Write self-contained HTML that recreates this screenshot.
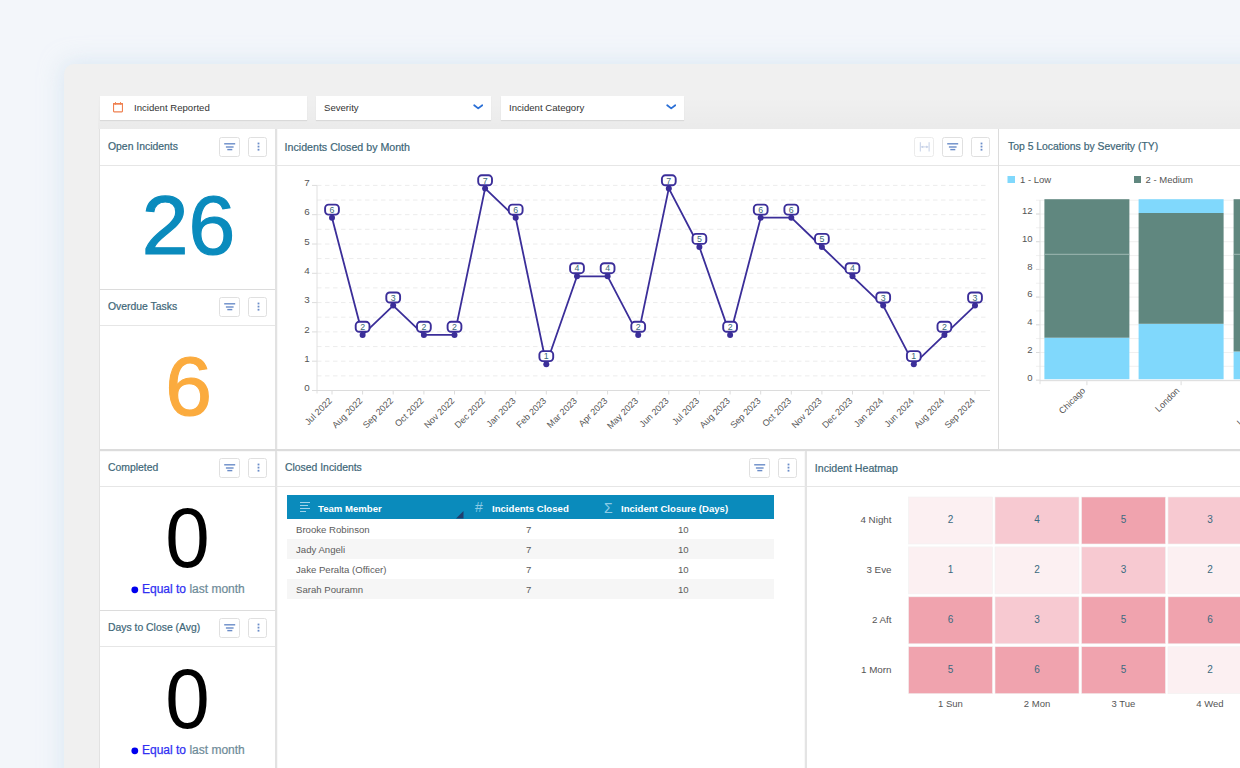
<!DOCTYPE html><html><head><meta charset="utf-8"><style>
*{box-sizing:border-box}
html,body{margin:0;padding:0;width:1240px;height:768px;overflow:hidden;background:#f3f6fa;font-family:"Liberation Sans", sans-serif}
.abs{position:absolute}
#cont{position:absolute;left:64px;top:64px;width:1300px;height:900px;background:#f0f0f0;border-radius:10px;box-shadow:0 0 22px 2px rgba(198,220,238,0.55)}
.panel{position:absolute;background:#fff}
.ttl{position:absolute;font-size:10.4px;color:#3d6677;white-space:nowrap;line-height:12px;-webkit-text-stroke:0.2px #3d6677}
.hline{position:absolute;height:1px;background:#e6e6e6}
.vline{position:absolute;width:1px;background:#dcdcdc}
.hl{position:absolute;height:1px;background:#dcdcdc}
.btn{position:absolute;border:1px solid #e0e0e0;border-radius:2.5px;background:#fff}
.fbox{position:absolute;background:#fff;top:96px;height:24px;box-shadow:0 1px 1px rgba(0,0,0,0.08)}
.ftxt{position:absolute;font-size:9.6px;color:#333;white-space:nowrap;line-height:12px}
.big{position:absolute;white-space:nowrap;text-align:center;line-height:1}
.eq{position:absolute;font-size:12px;white-space:nowrap;line-height:14px}
</style></head><body>
<div id="cont"></div>

<div class="abs" style="left:98px;top:97px;width:1200px;height:32px;background:linear-gradient(rgba(0,0,0,0),rgba(0,0,0,0.022))"></div>
<div class="fbox" style="left:100px;width:207px"></div>
<svg class="abs" style="left:112px;top:100.5px" width="12" height="12" viewBox="0 0 12 12"><rect x="1.55" y="2.6" width="8.9" height="8.3" rx="0.6" fill="none" stroke="#ef8050" stroke-width="1.1"/><rect x="1" y="2.1" width="10" height="1.5" fill="#ef8050"/><rect x="3.1" y="1" width="0.9" height="2.6" fill="#ef8050"/><rect x="8" y="1" width="0.9" height="2.6" fill="#ef8050"/></svg>
<div class="ftxt" style="left:134px;top:102px">Incident Reported</div>
<div class="fbox" style="left:316px;width:175px"></div>
<div class="ftxt" style="left:324px;top:102px">Severity</div>
<svg class="abs" style="left:473px;top:104px" width="10" height="6" viewBox="0 0 10 6"><path d="M1.2 1.2 L5.2 4.4 L9.3 1.2" fill="none" stroke="#2a6fd6" stroke-width="1.8" stroke-linecap="round" stroke-linejoin="round"/></svg>
<div class="fbox" style="left:501px;width:183px"></div>
<div class="ftxt" style="left:509px;top:102px">Incident Category</div>
<svg class="abs" style="left:666px;top:104px" width="10" height="6" viewBox="0 0 10 6"><path d="M1.2 1.2 L5.2 4.4 L9.3 1.2" fill="none" stroke="#2a6fd6" stroke-width="1.8" stroke-linecap="round" stroke-linejoin="round"/></svg>
<div class="panel" style="left:100px;top:129px;width:1140px;height:639px"></div>
<div class="vline" style="left:277px;top:129px;height:639px;background:#f8f8f8"></div>
<div class="vline" style="left:804px;top:450px;height:318px;background:#f8f8f8"></div>
<div class="hl" style="left:100px;top:451px;width:1140px;background:#f8f8f8"></div>
<div class="vline" style="left:275px;top:129px;height:639px;width:2px;background:#e2e2e2"></div>
<div class="vline" style="left:998px;top:129px;height:321px"></div>
<div class="vline" style="left:805px;top:450px;height:318px;width:2px;background:#e4e4e4"></div>
<div class="hl" style="left:100px;top:289px;width:175px"></div>
<div class="hl" style="left:100px;top:449px;width:1140px;height:2px;background:#dcdcdc"></div>
<div class="hl" style="left:100px;top:610px;width:175px"></div>
<div class="vline" style="left:99px;top:129px;height:639px;background:#e2e2e2"></div>
<div class="ttl" style="left:108px;top:141px">Open Incidents</div><div class="hline" style="left:100px;top:165px;width:175px"></div><div class="btn" style="left:219px;top:137px;width:21px;height:20px;opacity:1.0"><svg width="20" height="19" viewBox="0 0 20 19" style="position:absolute;left:0;top:0"><rect x="4.2" y="5.1" width="11" height="1.4" fill="#6a8cc8"/><rect x="5.9" y="8.3" width="7.7" height="1.4" fill="#6a8cc8"/><rect x="7.3" y="10.9" width="5" height="1.4" fill="#6a8cc8"/></svg></div><div class="btn" style="left:248px;top:137px;width:19px;height:20px;opacity:1.0"><svg width="19" height="19" viewBox="0 0 19 19" style="position:absolute;left:0;top:0"><rect x="8.6" y="4.6" width="1.8" height="1.8" fill="#6a8cc8"/><rect x="8.6" y="7.7" width="1.8" height="1.8" fill="#6a8cc8"/><rect x="8.6" y="10.8" width="1.8" height="1.8" fill="#6a8cc8"/></svg></div>
<div class="ttl" style="left:108px;top:301px">Overdue Tasks</div><div class="hline" style="left:100px;top:325px;width:175px"></div><div class="btn" style="left:219px;top:297px;width:21px;height:20px;opacity:1.0"><svg width="20" height="19" viewBox="0 0 20 19" style="position:absolute;left:0;top:0"><rect x="4.2" y="5.1" width="11" height="1.4" fill="#6a8cc8"/><rect x="5.9" y="8.3" width="7.7" height="1.4" fill="#6a8cc8"/><rect x="7.3" y="10.9" width="5" height="1.4" fill="#6a8cc8"/></svg></div><div class="btn" style="left:248px;top:297px;width:19px;height:20px;opacity:1.0"><svg width="19" height="19" viewBox="0 0 19 19" style="position:absolute;left:0;top:0"><rect x="8.6" y="4.6" width="1.8" height="1.8" fill="#6a8cc8"/><rect x="8.6" y="7.7" width="1.8" height="1.8" fill="#6a8cc8"/><rect x="8.6" y="10.8" width="1.8" height="1.8" fill="#6a8cc8"/></svg></div>
<div class="ttl" style="left:108px;top:462px">Completed</div><div class="hline" style="left:100px;top:486px;width:175px"></div><div class="btn" style="left:219px;top:458px;width:21px;height:20px;opacity:1.0"><svg width="20" height="19" viewBox="0 0 20 19" style="position:absolute;left:0;top:0"><rect x="4.2" y="5.1" width="11" height="1.4" fill="#6a8cc8"/><rect x="5.9" y="8.3" width="7.7" height="1.4" fill="#6a8cc8"/><rect x="7.3" y="10.9" width="5" height="1.4" fill="#6a8cc8"/></svg></div><div class="btn" style="left:248px;top:458px;width:19px;height:20px;opacity:1.0"><svg width="19" height="19" viewBox="0 0 19 19" style="position:absolute;left:0;top:0"><rect x="8.6" y="4.6" width="1.8" height="1.8" fill="#6a8cc8"/><rect x="8.6" y="7.7" width="1.8" height="1.8" fill="#6a8cc8"/><rect x="8.6" y="10.8" width="1.8" height="1.8" fill="#6a8cc8"/></svg></div>
<div class="ttl" style="left:108px;top:622px">Days to Close (Avg)</div><div class="hline" style="left:100px;top:646px;width:175px"></div><div class="btn" style="left:219px;top:618px;width:21px;height:20px;opacity:1.0"><svg width="20" height="19" viewBox="0 0 20 19" style="position:absolute;left:0;top:0"><rect x="4.2" y="5.1" width="11" height="1.4" fill="#6a8cc8"/><rect x="5.9" y="8.3" width="7.7" height="1.4" fill="#6a8cc8"/><rect x="7.3" y="10.9" width="5" height="1.4" fill="#6a8cc8"/></svg></div><div class="btn" style="left:248px;top:618px;width:19px;height:20px;opacity:1.0"><svg width="19" height="19" viewBox="0 0 19 19" style="position:absolute;left:0;top:0"><rect x="8.6" y="4.6" width="1.8" height="1.8" fill="#6a8cc8"/><rect x="8.6" y="7.7" width="1.8" height="1.8" fill="#6a8cc8"/><rect x="8.6" y="10.8" width="1.8" height="1.8" fill="#6a8cc8"/></svg></div>
<div class="big" style="left:101px;width:175px;top:183px;font-size:84px;color:#0a8bbd;-webkit-text-stroke:1.2px #0a8bbd">26</div>
<div class="big" style="left:101px;width:175px;top:344px;font-size:84px;color:#fbab3e;-webkit-text-stroke:1.2px #fbab3e">6</div>
<div class="big" style="left:100px;width:175px;top:494px;font-size:86px;color:#000;font-weight:400;transform:scaleX(0.93)">0</div>
<div class="big" style="left:100px;width:175px;top:655px;font-size:86px;color:#000;font-weight:400;transform:scaleX(0.93)">0</div>
<svg class="abs" style="left:131px;top:585.5px" width="8" height="8"><circle cx="3.8" cy="3.8" r="3.4" fill="#0000ee"/></svg><div class="eq" style="left:142px;top:582px"><span style="color:#3030f2;-webkit-text-stroke:0.25px #3030f2">Equal to</span> <span style="color:#6d8a97;-webkit-text-stroke:0.2px #6d8a97">last month</span></div>
<svg class="abs" style="left:131px;top:746.5px" width="8" height="8"><circle cx="3.8" cy="3.8" r="3.4" fill="#0000ee"/></svg><div class="eq" style="left:142px;top:743px"><span style="color:#3030f2;-webkit-text-stroke:0.25px #3030f2">Equal to</span> <span style="color:#6d8a97;-webkit-text-stroke:0.2px #6d8a97">last month</span></div>
<div class="ttl" style="left:284.6px;top:141px;font-size:10.65px">Incidents Closed by Month</div>
<div class="hline" style="left:276px;top:165px;width:722px"></div>
<div class="btn" style="left:914px;top:137px;width:20px;height:20px;border-color:#ebebeb"><svg width="18" height="18" style="position:absolute;left:0;top:0"><rect x="4.8" y="4.2" width="1" height="9.3" fill="#c4cfe6"/><rect x="13.6" y="4.2" width="1" height="9.3" fill="#c4cfe6"/><path d="M6 8.9 H13.4" stroke="#c4cfe6" stroke-width="0.9"/><path d="M6.2 8.9 L8.2 7.6 L8.2 10.2 Z M13.2 8.9 L11.2 7.6 L11.2 10.2 Z" fill="#c4cfe6"/></svg></div>
<div class="btn" style="left:942px;top:137px;width:21px;height:20px;opacity:1.0"><svg width="20" height="19" viewBox="0 0 20 19" style="position:absolute;left:0;top:0"><rect x="4.2" y="5.1" width="11" height="1.4" fill="#6a8cc8"/><rect x="5.9" y="8.3" width="7.7" height="1.4" fill="#6a8cc8"/><rect x="7.3" y="10.9" width="5" height="1.4" fill="#6a8cc8"/></svg></div>
<div class="btn" style="left:971px;top:137px;width:19px;height:20px;opacity:1.0"><svg width="19" height="19" viewBox="0 0 19 19" style="position:absolute;left:0;top:0"><rect x="8.6" y="4.6" width="1.8" height="1.8" fill="#6a8cc8"/><rect x="8.6" y="7.7" width="1.8" height="1.8" fill="#6a8cc8"/><rect x="8.6" y="10.8" width="1.8" height="1.8" fill="#6a8cc8"/></svg></div>
<svg class="abs" style="left:0;top:0" width="1240" height="768">
<line x1="317" y1="375.9" x2="987" y2="375.9" stroke="#ececec" stroke-width="1" stroke-dasharray="4.5 3.5"/>
<line x1="317" y1="361.2" x2="987" y2="361.2" stroke="#ececec" stroke-width="1" stroke-dasharray="4.5 3.5"/>
<line x1="317" y1="346.6" x2="987" y2="346.6" stroke="#ececec" stroke-width="1" stroke-dasharray="4.5 3.5"/>
<line x1="317" y1="331.9" x2="987" y2="331.9" stroke="#ececec" stroke-width="1" stroke-dasharray="4.5 3.5"/>
<line x1="317" y1="317.2" x2="987" y2="317.2" stroke="#ececec" stroke-width="1" stroke-dasharray="4.5 3.5"/>
<line x1="317" y1="302.6" x2="987" y2="302.6" stroke="#ececec" stroke-width="1" stroke-dasharray="4.5 3.5"/>
<line x1="317" y1="287.9" x2="987" y2="287.9" stroke="#ececec" stroke-width="1" stroke-dasharray="4.5 3.5"/>
<line x1="317" y1="273.3" x2="987" y2="273.3" stroke="#ececec" stroke-width="1" stroke-dasharray="4.5 3.5"/>
<line x1="317" y1="258.6" x2="987" y2="258.6" stroke="#ececec" stroke-width="1" stroke-dasharray="4.5 3.5"/>
<line x1="317" y1="244.0" x2="987" y2="244.0" stroke="#ececec" stroke-width="1" stroke-dasharray="4.5 3.5"/>
<line x1="317" y1="229.3" x2="987" y2="229.3" stroke="#ececec" stroke-width="1" stroke-dasharray="4.5 3.5"/>
<line x1="317" y1="214.7" x2="987" y2="214.7" stroke="#ececec" stroke-width="1" stroke-dasharray="4.5 3.5"/>
<line x1="317" y1="200.0" x2="987" y2="200.0" stroke="#ececec" stroke-width="1" stroke-dasharray="4.5 3.5"/>
<line x1="317" y1="185.4" x2="987" y2="185.4" stroke="#ececec" stroke-width="1" stroke-dasharray="4.5 3.5"/>
<line x1="312" y1="390.5" x2="317" y2="390.5" stroke="#dcdcdc" stroke-width="1"/>
<text x="309.8" y="391.1" font-size="9.8" fill="#555" text-anchor="end" font-family="Liberation Sans">0</text>
<line x1="312" y1="361.2" x2="317" y2="361.2" stroke="#dcdcdc" stroke-width="1"/>
<text x="309.8" y="361.8" font-size="9.8" fill="#555" text-anchor="end" font-family="Liberation Sans">1</text>
<line x1="312" y1="331.9" x2="317" y2="331.9" stroke="#dcdcdc" stroke-width="1"/>
<text x="309.8" y="332.5" font-size="9.8" fill="#555" text-anchor="end" font-family="Liberation Sans">2</text>
<line x1="312" y1="302.6" x2="317" y2="302.6" stroke="#dcdcdc" stroke-width="1"/>
<text x="309.8" y="303.2" font-size="9.8" fill="#555" text-anchor="end" font-family="Liberation Sans">3</text>
<line x1="312" y1="273.3" x2="317" y2="273.3" stroke="#dcdcdc" stroke-width="1"/>
<text x="309.8" y="273.9" font-size="9.8" fill="#555" text-anchor="end" font-family="Liberation Sans">4</text>
<line x1="312" y1="244.0" x2="317" y2="244.0" stroke="#dcdcdc" stroke-width="1"/>
<text x="309.8" y="244.6" font-size="9.8" fill="#555" text-anchor="end" font-family="Liberation Sans">5</text>
<line x1="312" y1="214.7" x2="317" y2="214.7" stroke="#dcdcdc" stroke-width="1"/>
<text x="309.8" y="215.3" font-size="9.8" fill="#555" text-anchor="end" font-family="Liberation Sans">6</text>
<line x1="312" y1="185.4" x2="317" y2="185.4" stroke="#dcdcdc" stroke-width="1"/>
<text x="309.8" y="186.0" font-size="9.8" fill="#555" text-anchor="end" font-family="Liberation Sans">7</text>
<line x1="317" y1="185.4" x2="317" y2="393.5" stroke="#e0e0e0" stroke-width="1"/>
<line x1="312" y1="390.5" x2="990" y2="390.5" stroke="#dcdcdc" stroke-width="1.2"/>
<line x1="332.0" y1="390.5" x2="332.0" y2="394.5" stroke="#dcdcdc" stroke-width="1"/>
<text transform="translate(332.5,401.5) rotate(-45)" font-size="9" fill="#555" text-anchor="end" font-family="Liberation Sans">Jul 2022</text>
<line x1="362.6" y1="390.5" x2="362.6" y2="394.5" stroke="#dcdcdc" stroke-width="1"/>
<text transform="translate(363.1,401.5) rotate(-45)" font-size="9" fill="#555" text-anchor="end" font-family="Liberation Sans">Aug 2022</text>
<line x1="393.2" y1="390.5" x2="393.2" y2="394.5" stroke="#dcdcdc" stroke-width="1"/>
<text transform="translate(393.7,401.5) rotate(-45)" font-size="9" fill="#555" text-anchor="end" font-family="Liberation Sans">Sep 2022</text>
<line x1="423.9" y1="390.5" x2="423.9" y2="394.5" stroke="#dcdcdc" stroke-width="1"/>
<text transform="translate(424.4,401.5) rotate(-45)" font-size="9" fill="#555" text-anchor="end" font-family="Liberation Sans">Oct 2022</text>
<line x1="454.5" y1="390.5" x2="454.5" y2="394.5" stroke="#dcdcdc" stroke-width="1"/>
<text transform="translate(455.0,401.5) rotate(-45)" font-size="9" fill="#555" text-anchor="end" font-family="Liberation Sans">Nov 2022</text>
<line x1="485.1" y1="390.5" x2="485.1" y2="394.5" stroke="#dcdcdc" stroke-width="1"/>
<text transform="translate(485.6,401.5) rotate(-45)" font-size="9" fill="#555" text-anchor="end" font-family="Liberation Sans">Dec 2022</text>
<line x1="515.7" y1="390.5" x2="515.7" y2="394.5" stroke="#dcdcdc" stroke-width="1"/>
<text transform="translate(516.2,401.5) rotate(-45)" font-size="9" fill="#555" text-anchor="end" font-family="Liberation Sans">Jan 2023</text>
<line x1="546.3" y1="390.5" x2="546.3" y2="394.5" stroke="#dcdcdc" stroke-width="1"/>
<text transform="translate(546.8,401.5) rotate(-45)" font-size="9" fill="#555" text-anchor="end" font-family="Liberation Sans">Feb 2023</text>
<line x1="577.0" y1="390.5" x2="577.0" y2="394.5" stroke="#dcdcdc" stroke-width="1"/>
<text transform="translate(577.5,401.5) rotate(-45)" font-size="9" fill="#555" text-anchor="end" font-family="Liberation Sans">Mar 2023</text>
<line x1="607.6" y1="390.5" x2="607.6" y2="394.5" stroke="#dcdcdc" stroke-width="1"/>
<text transform="translate(608.1,401.5) rotate(-45)" font-size="9" fill="#555" text-anchor="end" font-family="Liberation Sans">Apr 2023</text>
<line x1="638.2" y1="390.5" x2="638.2" y2="394.5" stroke="#dcdcdc" stroke-width="1"/>
<text transform="translate(638.7,401.5) rotate(-45)" font-size="9" fill="#555" text-anchor="end" font-family="Liberation Sans">May 2023</text>
<line x1="668.8" y1="390.5" x2="668.8" y2="394.5" stroke="#dcdcdc" stroke-width="1"/>
<text transform="translate(669.3,401.5) rotate(-45)" font-size="9" fill="#555" text-anchor="end" font-family="Liberation Sans">Jun 2023</text>
<line x1="699.4" y1="390.5" x2="699.4" y2="394.5" stroke="#dcdcdc" stroke-width="1"/>
<text transform="translate(699.9,401.5) rotate(-45)" font-size="9" fill="#555" text-anchor="end" font-family="Liberation Sans">Jul 2023</text>
<line x1="730.1" y1="390.5" x2="730.1" y2="394.5" stroke="#dcdcdc" stroke-width="1"/>
<text transform="translate(730.6,401.5) rotate(-45)" font-size="9" fill="#555" text-anchor="end" font-family="Liberation Sans">Aug 2023</text>
<line x1="760.7" y1="390.5" x2="760.7" y2="394.5" stroke="#dcdcdc" stroke-width="1"/>
<text transform="translate(761.2,401.5) rotate(-45)" font-size="9" fill="#555" text-anchor="end" font-family="Liberation Sans">Sep 2023</text>
<line x1="791.3" y1="390.5" x2="791.3" y2="394.5" stroke="#dcdcdc" stroke-width="1"/>
<text transform="translate(791.8,401.5) rotate(-45)" font-size="9" fill="#555" text-anchor="end" font-family="Liberation Sans">Oct 2023</text>
<line x1="821.9" y1="390.5" x2="821.9" y2="394.5" stroke="#dcdcdc" stroke-width="1"/>
<text transform="translate(822.4,401.5) rotate(-45)" font-size="9" fill="#555" text-anchor="end" font-family="Liberation Sans">Nov 2023</text>
<line x1="852.5" y1="390.5" x2="852.5" y2="394.5" stroke="#dcdcdc" stroke-width="1"/>
<text transform="translate(853.0,401.5) rotate(-45)" font-size="9" fill="#555" text-anchor="end" font-family="Liberation Sans">Dec 2023</text>
<line x1="883.2" y1="390.5" x2="883.2" y2="394.5" stroke="#dcdcdc" stroke-width="1"/>
<text transform="translate(883.7,401.5) rotate(-45)" font-size="9" fill="#555" text-anchor="end" font-family="Liberation Sans">Jan 2024</text>
<line x1="913.8" y1="390.5" x2="913.8" y2="394.5" stroke="#dcdcdc" stroke-width="1"/>
<text transform="translate(914.3,401.5) rotate(-45)" font-size="9" fill="#555" text-anchor="end" font-family="Liberation Sans">Jun 2024</text>
<line x1="944.4" y1="390.5" x2="944.4" y2="394.5" stroke="#dcdcdc" stroke-width="1"/>
<text transform="translate(944.9,401.5) rotate(-45)" font-size="9" fill="#555" text-anchor="end" font-family="Liberation Sans">Aug 2024</text>
<line x1="975.0" y1="390.5" x2="975.0" y2="394.5" stroke="#dcdcdc" stroke-width="1"/>
<text transform="translate(975.5,401.5) rotate(-45)" font-size="9" fill="#555" text-anchor="end" font-family="Liberation Sans">Sep 2024</text>
<polyline points="332.0,217.7 362.6,334.9 393.2,305.6 423.9,334.9 454.5,334.9 485.1,188.4 515.7,217.7 546.3,364.2 577.0,276.3 607.6,276.3 638.2,334.9 668.8,188.4 699.4,247.0 730.1,334.9 760.7,217.7 791.3,217.7 821.9,247.0 852.5,276.3 883.2,305.6 913.8,364.2 944.4,334.9 975.0,305.6" fill="none" stroke="#3b2e99" stroke-width="1.8" stroke-linejoin="round"/>
<circle cx="332.0" cy="217.7" r="3" fill="#3b2e99"/>
<rect x="325.1" y="204.6" width="13.8" height="10" rx="3.5" fill="#fff" stroke="#3b2e99" stroke-width="1.9"/>
<text x="332.0" y="212.8" font-size="8.8" fill="#3a6878" text-anchor="middle" font-family="Liberation Sans">6</text>
<circle cx="362.6" cy="334.9" r="3" fill="#3b2e99"/>
<rect x="355.7" y="321.8" width="13.8" height="10" rx="3.5" fill="#fff" stroke="#3b2e99" stroke-width="1.9"/>
<text x="362.6" y="330.0" font-size="8.8" fill="#3a6878" text-anchor="middle" font-family="Liberation Sans">2</text>
<circle cx="393.2" cy="305.6" r="3" fill="#3b2e99"/>
<rect x="386.3" y="292.5" width="13.8" height="10" rx="3.5" fill="#fff" stroke="#3b2e99" stroke-width="1.9"/>
<text x="393.2" y="300.7" font-size="8.8" fill="#3a6878" text-anchor="middle" font-family="Liberation Sans">3</text>
<circle cx="423.9" cy="334.9" r="3" fill="#3b2e99"/>
<rect x="417.0" y="321.8" width="13.8" height="10" rx="3.5" fill="#fff" stroke="#3b2e99" stroke-width="1.9"/>
<text x="423.9" y="330.0" font-size="8.8" fill="#3a6878" text-anchor="middle" font-family="Liberation Sans">2</text>
<circle cx="454.5" cy="334.9" r="3" fill="#3b2e99"/>
<rect x="447.6" y="321.8" width="13.8" height="10" rx="3.5" fill="#fff" stroke="#3b2e99" stroke-width="1.9"/>
<text x="454.5" y="330.0" font-size="8.8" fill="#3a6878" text-anchor="middle" font-family="Liberation Sans">2</text>
<circle cx="485.1" cy="188.4" r="3" fill="#3b2e99"/>
<rect x="478.2" y="175.3" width="13.8" height="10" rx="3.5" fill="#fff" stroke="#3b2e99" stroke-width="1.9"/>
<text x="485.1" y="183.5" font-size="8.8" fill="#3a6878" text-anchor="middle" font-family="Liberation Sans">7</text>
<circle cx="515.7" cy="217.7" r="3" fill="#3b2e99"/>
<rect x="508.8" y="204.6" width="13.8" height="10" rx="3.5" fill="#fff" stroke="#3b2e99" stroke-width="1.9"/>
<text x="515.7" y="212.8" font-size="8.8" fill="#3a6878" text-anchor="middle" font-family="Liberation Sans">6</text>
<circle cx="546.3" cy="364.2" r="3" fill="#3b2e99"/>
<rect x="539.4" y="351.1" width="13.8" height="10" rx="3.5" fill="#fff" stroke="#3b2e99" stroke-width="1.9"/>
<text x="546.3" y="359.3" font-size="8.8" fill="#3a6878" text-anchor="middle" font-family="Liberation Sans">1</text>
<circle cx="577.0" cy="276.3" r="3" fill="#3b2e99"/>
<rect x="570.1" y="263.2" width="13.8" height="10" rx="3.5" fill="#fff" stroke="#3b2e99" stroke-width="1.9"/>
<text x="577.0" y="271.4" font-size="8.8" fill="#3a6878" text-anchor="middle" font-family="Liberation Sans">4</text>
<circle cx="607.6" cy="276.3" r="3" fill="#3b2e99"/>
<rect x="600.7" y="263.2" width="13.8" height="10" rx="3.5" fill="#fff" stroke="#3b2e99" stroke-width="1.9"/>
<text x="607.6" y="271.4" font-size="8.8" fill="#3a6878" text-anchor="middle" font-family="Liberation Sans">4</text>
<circle cx="638.2" cy="334.9" r="3" fill="#3b2e99"/>
<rect x="631.3" y="321.8" width="13.8" height="10" rx="3.5" fill="#fff" stroke="#3b2e99" stroke-width="1.9"/>
<text x="638.2" y="330.0" font-size="8.8" fill="#3a6878" text-anchor="middle" font-family="Liberation Sans">2</text>
<circle cx="668.8" cy="188.4" r="3" fill="#3b2e99"/>
<rect x="661.9" y="175.3" width="13.8" height="10" rx="3.5" fill="#fff" stroke="#3b2e99" stroke-width="1.9"/>
<text x="668.8" y="183.5" font-size="8.8" fill="#3a6878" text-anchor="middle" font-family="Liberation Sans">7</text>
<circle cx="699.4" cy="247.0" r="3" fill="#3b2e99"/>
<rect x="692.5" y="233.9" width="13.8" height="10" rx="3.5" fill="#fff" stroke="#3b2e99" stroke-width="1.9"/>
<text x="699.4" y="242.1" font-size="8.8" fill="#3a6878" text-anchor="middle" font-family="Liberation Sans">5</text>
<circle cx="730.1" cy="334.9" r="3" fill="#3b2e99"/>
<rect x="723.2" y="321.8" width="13.8" height="10" rx="3.5" fill="#fff" stroke="#3b2e99" stroke-width="1.9"/>
<text x="730.1" y="330.0" font-size="8.8" fill="#3a6878" text-anchor="middle" font-family="Liberation Sans">2</text>
<circle cx="760.7" cy="217.7" r="3" fill="#3b2e99"/>
<rect x="753.8" y="204.6" width="13.8" height="10" rx="3.5" fill="#fff" stroke="#3b2e99" stroke-width="1.9"/>
<text x="760.7" y="212.8" font-size="8.8" fill="#3a6878" text-anchor="middle" font-family="Liberation Sans">6</text>
<circle cx="791.3" cy="217.7" r="3" fill="#3b2e99"/>
<rect x="784.4" y="204.6" width="13.8" height="10" rx="3.5" fill="#fff" stroke="#3b2e99" stroke-width="1.9"/>
<text x="791.3" y="212.8" font-size="8.8" fill="#3a6878" text-anchor="middle" font-family="Liberation Sans">6</text>
<circle cx="821.9" cy="247.0" r="3" fill="#3b2e99"/>
<rect x="815.0" y="233.9" width="13.8" height="10" rx="3.5" fill="#fff" stroke="#3b2e99" stroke-width="1.9"/>
<text x="821.9" y="242.1" font-size="8.8" fill="#3a6878" text-anchor="middle" font-family="Liberation Sans">5</text>
<circle cx="852.5" cy="276.3" r="3" fill="#3b2e99"/>
<rect x="845.6" y="263.2" width="13.8" height="10" rx="3.5" fill="#fff" stroke="#3b2e99" stroke-width="1.9"/>
<text x="852.5" y="271.4" font-size="8.8" fill="#3a6878" text-anchor="middle" font-family="Liberation Sans">4</text>
<circle cx="883.2" cy="305.6" r="3" fill="#3b2e99"/>
<rect x="876.3" y="292.5" width="13.8" height="10" rx="3.5" fill="#fff" stroke="#3b2e99" stroke-width="1.9"/>
<text x="883.2" y="300.7" font-size="8.8" fill="#3a6878" text-anchor="middle" font-family="Liberation Sans">3</text>
<circle cx="913.8" cy="364.2" r="3" fill="#3b2e99"/>
<rect x="906.9" y="351.1" width="13.8" height="10" rx="3.5" fill="#fff" stroke="#3b2e99" stroke-width="1.9"/>
<text x="913.8" y="359.3" font-size="8.8" fill="#3a6878" text-anchor="middle" font-family="Liberation Sans">1</text>
<circle cx="944.4" cy="334.9" r="3" fill="#3b2e99"/>
<rect x="937.5" y="321.8" width="13.8" height="10" rx="3.5" fill="#fff" stroke="#3b2e99" stroke-width="1.9"/>
<text x="944.4" y="330.0" font-size="8.8" fill="#3a6878" text-anchor="middle" font-family="Liberation Sans">2</text>
<circle cx="975.0" cy="305.6" r="3" fill="#3b2e99"/>
<rect x="968.1" y="292.5" width="13.8" height="10" rx="3.5" fill="#fff" stroke="#3b2e99" stroke-width="1.9"/>
<text x="975.0" y="300.7" font-size="8.8" fill="#3a6878" text-anchor="middle" font-family="Liberation Sans">3</text>
<rect x="1007.5" y="176" width="7.5" height="7" fill="#80d8fc"/>
<text x="1020" y="183" font-size="9.5" fill="#555" font-family="Liberation Sans">1 - Low</text>
<rect x="1134" y="176" width="7" height="7" fill="#60877f"/>
<text x="1145.5" y="183" font-size="9.5" fill="#555" font-family="Liberation Sans">2 - Medium</text>
<line x1="1036" y1="380.2" x2="1240" y2="380.2" stroke="#f0f0f0" stroke-width="1"/>
<line x1="1036" y1="366.3" x2="1240" y2="366.3" stroke="#f0f0f0" stroke-width="1"/>
<line x1="1036" y1="352.5" x2="1240" y2="352.5" stroke="#f0f0f0" stroke-width="1"/>
<line x1="1036" y1="338.6" x2="1240" y2="338.6" stroke="#f0f0f0" stroke-width="1"/>
<line x1="1036" y1="324.8" x2="1240" y2="324.8" stroke="#f0f0f0" stroke-width="1"/>
<line x1="1036" y1="310.9" x2="1240" y2="310.9" stroke="#f0f0f0" stroke-width="1"/>
<line x1="1036" y1="297.1" x2="1240" y2="297.1" stroke="#f0f0f0" stroke-width="1"/>
<line x1="1036" y1="283.2" x2="1240" y2="283.2" stroke="#f0f0f0" stroke-width="1"/>
<line x1="1036" y1="269.4" x2="1240" y2="269.4" stroke="#f0f0f0" stroke-width="1"/>
<line x1="1036" y1="255.6" x2="1240" y2="255.6" stroke="#f0f0f0" stroke-width="1"/>
<line x1="1036" y1="241.7" x2="1240" y2="241.7" stroke="#f0f0f0" stroke-width="1"/>
<line x1="1036" y1="227.8" x2="1240" y2="227.8" stroke="#f0f0f0" stroke-width="1"/>
<line x1="1036" y1="214.0" x2="1240" y2="214.0" stroke="#f0f0f0" stroke-width="1"/>
<line x1="1036" y1="200.2" x2="1240" y2="200.2" stroke="#f0f0f0" stroke-width="1"/>
<line x1="1036" y1="380.2" x2="1040" y2="380.2" stroke="#dcdcdc" stroke-width="1"/>
<text x="1032.5" y="380.5" font-size="9.5" fill="#555" text-anchor="end" font-family="Liberation Sans">0</text>
<line x1="1036" y1="352.5" x2="1040" y2="352.5" stroke="#dcdcdc" stroke-width="1"/>
<text x="1032.5" y="352.8" font-size="9.5" fill="#555" text-anchor="end" font-family="Liberation Sans">2</text>
<line x1="1036" y1="324.8" x2="1040" y2="324.8" stroke="#dcdcdc" stroke-width="1"/>
<text x="1032.5" y="325.1" font-size="9.5" fill="#555" text-anchor="end" font-family="Liberation Sans">4</text>
<line x1="1036" y1="297.1" x2="1040" y2="297.1" stroke="#dcdcdc" stroke-width="1"/>
<text x="1032.5" y="297.4" font-size="9.5" fill="#555" text-anchor="end" font-family="Liberation Sans">6</text>
<line x1="1036" y1="269.4" x2="1040" y2="269.4" stroke="#dcdcdc" stroke-width="1"/>
<text x="1032.5" y="269.7" font-size="9.5" fill="#555" text-anchor="end" font-family="Liberation Sans">8</text>
<line x1="1036" y1="241.7" x2="1040" y2="241.7" stroke="#dcdcdc" stroke-width="1"/>
<text x="1032.5" y="242.0" font-size="9.5" fill="#555" text-anchor="end" font-family="Liberation Sans">10</text>
<line x1="1036" y1="214.0" x2="1040" y2="214.0" stroke="#dcdcdc" stroke-width="1"/>
<text x="1032.5" y="214.3" font-size="9.5" fill="#555" text-anchor="end" font-family="Liberation Sans">12</text>
<line x1="1040" y1="200.2" x2="1040" y2="384.2" stroke="#e0e0e0" stroke-width="1"/>
<line x1="1040" y1="380.7" x2="1240" y2="380.7" stroke="#dcdcdc" stroke-width="1"/>
<rect x="1044.4" y="337.6" width="85" height="41.6" fill="#80d8fc"/>
<rect x="1044.4" y="199.2" width="85" height="138.5" fill="#60877f"/>
<rect x="1138.6" y="323.8" width="85" height="55.4" fill="#80d8fc"/>
<rect x="1138.6" y="213.0" width="85" height="110.8" fill="#60877f"/>
<rect x="1138.6" y="199.2" width="85" height="13.8" fill="#80d8fc"/>
<rect x="1233.6" y="351.5" width="85" height="27.7" fill="#80d8fc"/>
<rect x="1233.6" y="199.2" width="85" height="152.3" fill="#60877f"/>
<line x1="1044.4" y1="254.3" x2="1129.3" y2="254.3" stroke="#9fb8b3" stroke-width="1"/>
<line x1="1233.6" y1="254.3" x2="1240" y2="254.3" stroke="#9fb8b3" stroke-width="1"/>
<line x1="1086.9" y1="381.2" x2="1086.9" y2="385.2" stroke="#dcdcdc" stroke-width="1"/>
<text transform="translate(1085.9,391.2) rotate(-45)" font-size="9" fill="#555" text-anchor="end" font-family="Liberation Sans">Chicago</text>
<line x1="1181.1" y1="381.2" x2="1181.1" y2="385.2" stroke="#dcdcdc" stroke-width="1"/>
<text transform="translate(1180.1,391.2) rotate(-45)" font-size="9" fill="#555" text-anchor="end" font-family="Liberation Sans">London</text>
<line x1="1276.1" y1="381.2" x2="1276.1" y2="385.2" stroke="#dcdcdc" stroke-width="1"/>
<text transform="translate(1275.1,391.2) rotate(-45)" font-size="9" fill="#555" text-anchor="end" font-family="Liberation Sans">Los Angeles</text>
<text x="891.5" y="523.4" font-size="9.8" fill="#555" text-anchor="end" font-family="Liberation Sans">4 Night</text>
<rect x="908.5" y="497.0" width="84" height="47" fill="#fcf0f2" stroke="#f2f2f2" stroke-width="0.6"/>
<text x="950.5" y="523.4" font-size="10" fill="#3a6a80" text-anchor="middle" font-family="Liberation Sans">2</text>
<rect x="995.0" y="497.0" width="84" height="47" fill="#f7c9d1" stroke="#f2f2f2" stroke-width="0.6"/>
<text x="1037.0" y="523.4" font-size="10" fill="#3a6a80" text-anchor="middle" font-family="Liberation Sans">4</text>
<rect x="1081.5" y="497.0" width="84" height="47" fill="#f0a3ae" stroke="#f2f2f2" stroke-width="0.6"/>
<text x="1123.5" y="523.4" font-size="10" fill="#3a6a80" text-anchor="middle" font-family="Liberation Sans">5</text>
<rect x="1168.0" y="497.0" width="84" height="47" fill="#f7c9d1" stroke="#f2f2f2" stroke-width="0.6"/>
<text x="1210.0" y="523.4" font-size="10" fill="#3a6a80" text-anchor="middle" font-family="Liberation Sans">3</text>
<text x="891.5" y="573.3" font-size="9.8" fill="#555" text-anchor="end" font-family="Liberation Sans">3 Eve</text>
<rect x="908.5" y="546.9" width="84" height="47" fill="#fcf0f2" stroke="#f2f2f2" stroke-width="0.6"/>
<text x="950.5" y="573.3" font-size="10" fill="#3a6a80" text-anchor="middle" font-family="Liberation Sans">1</text>
<rect x="995.0" y="546.9" width="84" height="47" fill="#fcf0f2" stroke="#f2f2f2" stroke-width="0.6"/>
<text x="1037.0" y="573.3" font-size="10" fill="#3a6a80" text-anchor="middle" font-family="Liberation Sans">2</text>
<rect x="1081.5" y="546.9" width="84" height="47" fill="#f7c9d1" stroke="#f2f2f2" stroke-width="0.6"/>
<text x="1123.5" y="573.3" font-size="10" fill="#3a6a80" text-anchor="middle" font-family="Liberation Sans">3</text>
<rect x="1168.0" y="546.9" width="84" height="47" fill="#fcf0f2" stroke="#f2f2f2" stroke-width="0.6"/>
<text x="1210.0" y="573.3" font-size="10" fill="#3a6a80" text-anchor="middle" font-family="Liberation Sans">2</text>
<text x="891.5" y="623.2" font-size="9.8" fill="#555" text-anchor="end" font-family="Liberation Sans">2 Aft</text>
<rect x="908.5" y="596.8" width="84" height="47" fill="#f0a3ae" stroke="#f2f2f2" stroke-width="0.6"/>
<text x="950.5" y="623.2" font-size="10" fill="#3a6a80" text-anchor="middle" font-family="Liberation Sans">6</text>
<rect x="995.0" y="596.8" width="84" height="47" fill="#f7c9d1" stroke="#f2f2f2" stroke-width="0.6"/>
<text x="1037.0" y="623.2" font-size="10" fill="#3a6a80" text-anchor="middle" font-family="Liberation Sans">3</text>
<rect x="1081.5" y="596.8" width="84" height="47" fill="#f0a3ae" stroke="#f2f2f2" stroke-width="0.6"/>
<text x="1123.5" y="623.2" font-size="10" fill="#3a6a80" text-anchor="middle" font-family="Liberation Sans">5</text>
<rect x="1168.0" y="596.8" width="84" height="47" fill="#f0a3ae" stroke="#f2f2f2" stroke-width="0.6"/>
<text x="1210.0" y="623.2" font-size="10" fill="#3a6a80" text-anchor="middle" font-family="Liberation Sans">6</text>
<text x="891.5" y="673.1" font-size="9.8" fill="#555" text-anchor="end" font-family="Liberation Sans">1 Morn</text>
<rect x="908.5" y="646.7" width="84" height="47" fill="#f0a3ae" stroke="#f2f2f2" stroke-width="0.6"/>
<text x="950.5" y="673.1" font-size="10" fill="#3a6a80" text-anchor="middle" font-family="Liberation Sans">5</text>
<rect x="995.0" y="646.7" width="84" height="47" fill="#f0a3ae" stroke="#f2f2f2" stroke-width="0.6"/>
<text x="1037.0" y="673.1" font-size="10" fill="#3a6a80" text-anchor="middle" font-family="Liberation Sans">6</text>
<rect x="1081.5" y="646.7" width="84" height="47" fill="#f0a3ae" stroke="#f2f2f2" stroke-width="0.6"/>
<text x="1123.5" y="673.1" font-size="10" fill="#3a6a80" text-anchor="middle" font-family="Liberation Sans">5</text>
<rect x="1168.0" y="646.7" width="84" height="47" fill="#fcf0f2" stroke="#f2f2f2" stroke-width="0.6"/>
<text x="1210.0" y="673.1" font-size="10" fill="#3a6a80" text-anchor="middle" font-family="Liberation Sans">2</text>
<text x="950.5" y="707" font-size="9.5" fill="#555" text-anchor="middle" font-family="Liberation Sans">1 Sun</text>
<text x="1037.0" y="707" font-size="9.5" fill="#555" text-anchor="middle" font-family="Liberation Sans">2 Mon</text>
<text x="1123.5" y="707" font-size="9.5" fill="#555" text-anchor="middle" font-family="Liberation Sans">3 Tue</text>
<text x="1210.0" y="707" font-size="9.5" fill="#555" text-anchor="middle" font-family="Liberation Sans">4 Wed</text>
</svg>
<div class="ttl" style="left:285px;top:462px">Closed Incidents</div>
<div class="hline" style="left:276px;top:486px;width:530px"></div>
<div class="btn" style="left:749px;top:458px;width:21px;height:20px;opacity:1.0"><svg width="20" height="19" viewBox="0 0 20 19" style="position:absolute;left:0;top:0"><rect x="4.2" y="5.1" width="11" height="1.4" fill="#6a8cc8"/><rect x="5.9" y="8.3" width="7.7" height="1.4" fill="#6a8cc8"/><rect x="7.3" y="10.9" width="5" height="1.4" fill="#6a8cc8"/></svg></div>
<div class="btn" style="left:778px;top:458px;width:19px;height:20px;opacity:1.0"><svg width="19" height="19" viewBox="0 0 19 19" style="position:absolute;left:0;top:0"><rect x="8.6" y="4.6" width="1.8" height="1.8" fill="#6a8cc8"/><rect x="8.6" y="7.7" width="1.8" height="1.8" fill="#6a8cc8"/><rect x="8.6" y="10.8" width="1.8" height="1.8" fill="#6a8cc8"/></svg></div>
<div class="abs" style="left:287px;top:495px;width:487px;height:24px;background:#0a8bbc"></div>
<svg class="abs" style="left:299px;top:500px" width="13" height="13"><g fill="#9fd3ea"><rect x="1" y="2" width="10" height="1"/><rect x="1" y="5" width="8" height="1"/><rect x="1" y="8" width="10" height="1"/><rect x="1" y="11" width="6" height="1"/></g></svg>
<div class="ftxt" style="left:318px;top:502.6px;color:#fff;font-weight:700">Team Member</div>
<svg class="abs" style="left:455px;top:510px" width="10" height="9"><path d="M1 8.5 L8.5 8.5 L8.5 1 Z" fill="#1f3f6e"/></svg>
<div class="ftxt" style="left:475px;top:501px;color:#8ccbe6;font-size:14px">#</div>
<div class="ftxt" style="left:492px;top:502.6px;color:#fff;font-weight:700">Incidents Closed</div>
<div class="ftxt" style="left:604px;top:501.5px;color:#8ccbe6;font-size:14px">&Sigma;</div>
<div class="ftxt" style="left:621px;top:502.6px;color:#fff;font-weight:700">Incident Closure (Days)</div>
<div class="abs" style="left:287px;top:519px;width:487px;height:20px;background:#fff"></div>
<div class="ftxt" style="left:296px;top:524px;color:#5c5c5c">Brooke Robinson</div>
<div class="ftxt" style="left:526px;top:524px;color:#5c5c5c">7</div>
<div class="ftxt" style="left:678px;top:524px;color:#5c5c5c">10</div>
<div class="abs" style="left:287px;top:539px;width:487px;height:20px;background:#f6f6f6"></div>
<div class="ftxt" style="left:296px;top:544px;color:#5c5c5c">Jady Angeli</div>
<div class="ftxt" style="left:526px;top:544px;color:#5c5c5c">7</div>
<div class="ftxt" style="left:678px;top:544px;color:#5c5c5c">10</div>
<div class="abs" style="left:287px;top:559px;width:487px;height:20px;background:#fff"></div>
<div class="ftxt" style="left:296px;top:564px;color:#5c5c5c">Jake Peralta (Officer)</div>
<div class="ftxt" style="left:526px;top:564px;color:#5c5c5c">7</div>
<div class="ftxt" style="left:678px;top:564px;color:#5c5c5c">10</div>
<div class="abs" style="left:287px;top:579px;width:487px;height:20px;background:#f6f6f6"></div>
<div class="ftxt" style="left:296px;top:584px;color:#5c5c5c">Sarah Pouramn</div>
<div class="ftxt" style="left:526px;top:584px;color:#5c5c5c">7</div>
<div class="ftxt" style="left:678px;top:584px;color:#5c5c5c">10</div>
<div class="ttl" style="left:814.8px;top:462px;font-size:10.6px">Incident Heatmap</div>
<div class="hline" style="left:807px;top:486px;width:433px"></div>
<div class="ttl" style="left:1008px;top:141px">Top 5 Locations by Severity (TY)</div>
<div class="hline" style="left:999px;top:165px;width:241px"></div>
</body></html>
